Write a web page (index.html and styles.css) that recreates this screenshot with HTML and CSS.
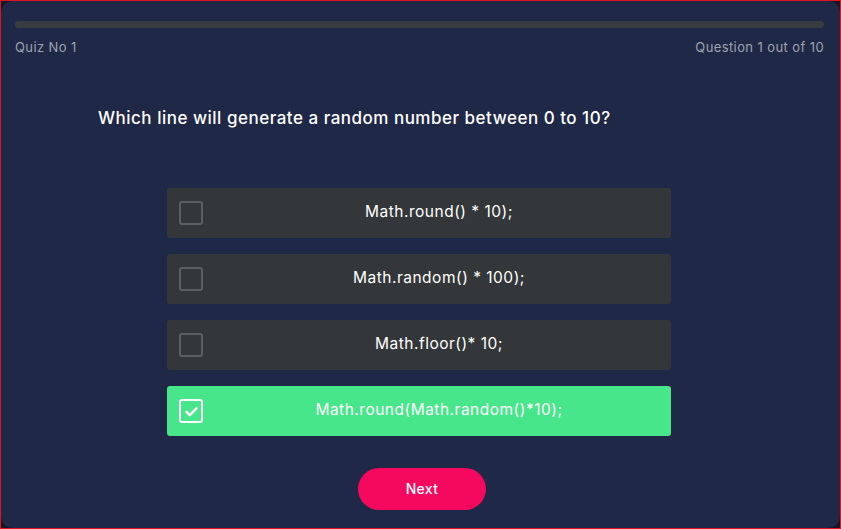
FILE: index.html
```html
<!DOCTYPE html>
<html>
<head>
<meta charset="utf-8">
<link rel="stylesheet" href="styles.css">
</head>
<body>
<div class="frame">
  <div class="quiz">
    <div class="progress"><div class="progress-fill"></div></div>
    <div class="meta">
      <span>Quiz No 1</span>
      <span>Question 1 out of 10</span>
    </div>
    <h1 class="question">Which line will generate a random number between 0 to 10?</h1>
    <div class="options">
      <div class="option"><span class="box"></span><span class="label">Math.round() * 10);</span></div>
      <div class="option"><span class="box"></span><span class="label">Math.random() * 100);</span></div>
      <div class="option"><span class="box"></span><span class="label">Math.floor()* 10;</span></div>
      <div class="option selected"><span class="box"><svg viewBox="0 0 24 24" width="17" height="17"><path d="M5 12.5l4.5 4.5L19 7.5" fill="none" stroke="#fff" stroke-width="3.4" stroke-linecap="round" stroke-linejoin="round"/></svg></span><span class="label">Math.round(Math.random()*10);</span></div>
    </div>
    <button class="next">Next</button>
  </div>
</div>
</body>
</html>
```
FILE: styles.css
```css
* { box-sizing: border-box; }
html, body { margin: 0; padding: 0; }
body {
  background: #141a2e;
  font-family: "Inter", "Open Sans", sans-serif;
}
.frame {
  width: 841px;
  height: 529px;
  border: 1px solid #e0141e;
  background: #131829;
}
.quiz {
  height: 100%;
  background: #1f2846;
  border-radius: 12px;
  padding: 20px 16px 0 14px;
  display: flex;
  flex-direction: column;
}
.progress {
  height: 7px;
  border-radius: 4px;
  background: #393c3e;
}
.meta {
  display: flex;
  justify-content: space-between;
  margin-top: 11px;
  font-size: 13px;
  color: #9ea3b1;
  letter-spacing: 0.4px;
}
.question {
  margin: 53px 0 0 83px;
  font-size: 17px;
  font-weight: 500;
  color: #ffffff;
  letter-spacing: 0.5px;
}
.options {
  margin: 60px 0 0 152px;
  width: 504px;
  display: flex;
  flex-direction: column;
  gap: 16px;
}
.option {
  height: 50px;
  border-radius: 3px;
  background: #343739;
  display: flex;
  align-items: center;
  padding-left: 12px;
}
.box {
  width: 24px;
  height: 24px;
  border: 2px solid #5b5e62;
  border-radius: 3px;
  display: flex;
  align-items: center;
  justify-content: center;
  flex: none;
}
.label {
  flex: 1;
  margin-left: 4px;
  padding-bottom: 3px;
  text-align: center;
  font-size: 15.5px;
  color: #ffffff;
  letter-spacing: 0.5px;
}
.option.selected { background: #47e68a; }
.option.selected .box { border-color: #ffffff; }
.next {
  margin: 32px 0 0 343px;
  width: 128px;
  height: 42px;
  border: none;
  border-radius: 21px;
  background: #f5095f;
  color: #ffffff;
  font-family: inherit;
  font-size: 14px;
  font-weight: 500;
  letter-spacing: 0.3px;
  padding-bottom: 2px;
}
```
